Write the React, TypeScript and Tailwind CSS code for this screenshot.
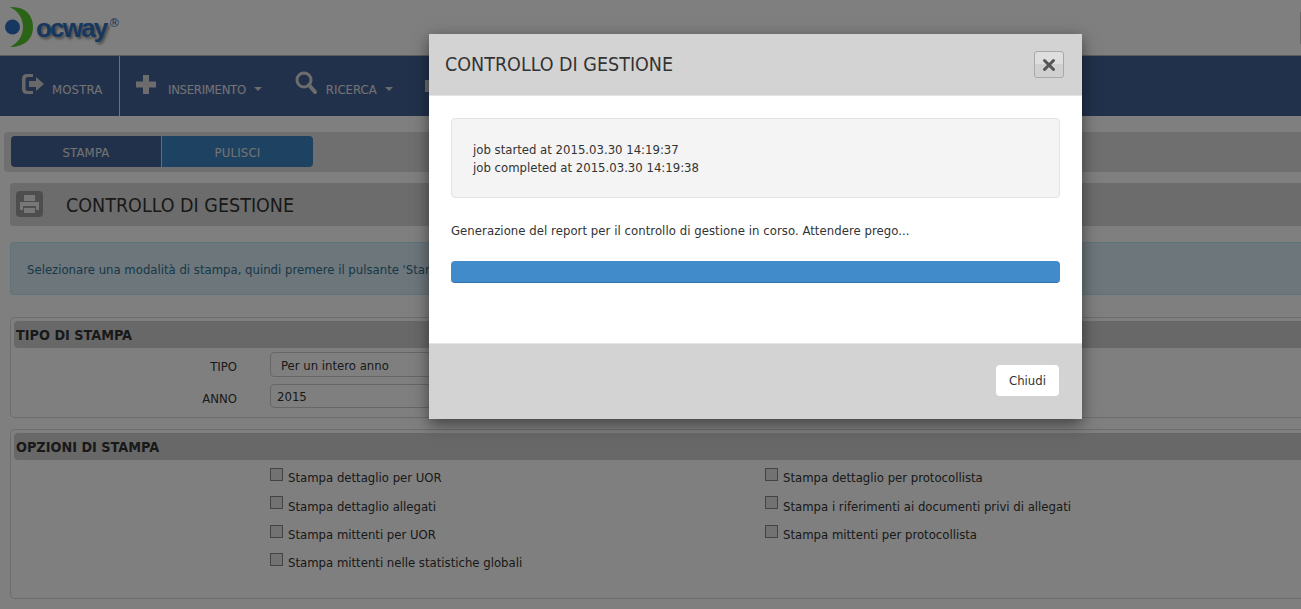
import { X } from 'lucide-react'

const leftOptions = [
  'Stampa dettaglio per UOR',
  'Stampa dettaglio allegati',
  'Stampa mittenti per UOR',
  'Stampa mittenti nelle statistiche globali',
]
const rightOptions = [
  'Stampa dettaglio per protocollista',
  'Stampa i riferimenti ai documenti privi di allegati',
  'Stampa mittenti per protocollista',
]

function Logo() {
  return (
    <div className="flex items-center h-[55px] pl-[5px]">
      <svg width="34" height="42" viewBox="0 0 34 42" className="shrink-0 -mt-[1px]">
        <circle cx="7.5" cy="21" r="7.5" fill="#2c6ebe" />
        <path d="M5 1 C20 0 28 9 28 21 C28 33 20 41 5 41 C13 37 18 30 18 21 C18 12 13 5 5 1 Z" fill="#56c62e" />
      </svg>
      <span className="font-['Liberation_Sans',sans-serif] [font-stretch:normal] font-bold text-[26px] tracking-[-1.8px] leading-none text-[#2c6ebe] -ml-[3px] mt-[1px] [text-shadow:2px_2px_3px_rgba(0,0,0,0.45)]">
        ocway
      </span>
      <span className="text-[13px] leading-none text-[#2c6ebe] self-start mt-[16px] ml-[2px]">®</span>
      <div className="ml-auto mb-[-1px] h-[32px] w-[1px] self-center bg-[#cccccc]" />
    </div>
  )
}

function Caret() {
  return <span className="inline-block ml-[8px] mt-[5px] border-x-[4px] border-x-transparent border-t-[4px] border-t-[#d8d8d8]" />
}

function NavBar() {
  return (
    <nav className="flex h-[61px] items-center bg-[#446296] border-t border-[#b8b8b8] text-[13px] text-[#e6e6e6]">
      <div className="flex h-full w-[120px] items-center border-r border-[#e0e0e0] pl-[21px]">
        <svg width="24" height="22" viewBox="0 0 24 22" className="mb-[4px]">
          <path d="M12 1 H6 Q1 1 1 6 V16 Q1 21 6 21 H12 V18 H7 Q4.5 18 4.5 15.5 V6.5 Q4.5 4 7 4 H12 Z" fill="#d0d0d0" />
          <path d="M8 8 H15 V4 L23 11 L15 18 V14 H8 Z" fill="#d0d0d0" />
        </svg>
        <span className="ml-[7px] mt-[7px] tracking-[0.15px]">MOSTRA</span>
      </div>
      <div className="flex items-center pl-[16px]">
        <svg width="20" height="19" viewBox="0 0 20 19" className="mb-[3px]">
          <path d="M7 0 H13 V6.5 H20 V12.5 H13 V19 H7 V12.5 H0 V6.5 H7 Z" fill="#d8d8d8" />
        </svg>
        <span className="ml-[12px] mt-[7px] tracking-[-0.3px]">INSERIMENTO</span>
        <Caret />
      </div>
      <div className="flex items-center pl-[33px]">
        <svg width="22" height="23" viewBox="0 0 22 23" className="mb-[7px]">
          <circle cx="9" cy="9" r="7" fill="none" stroke="#d8d8d8" strokeWidth="3" />
          <path d="M14 14 L20 21" stroke="#d8d8d8" strokeWidth="4" strokeLinecap="round" />
        </svg>
        <span className="ml-[9px] mt-[7px]">RICERCA</span>
        <Caret />
      </div>
      <div className="ml-[32px] h-[12px] w-[20px] bg-[#d8d8d8]" />
    </nav>
  )
}

function Toolbar() {
  return (
    <div className="mt-[16px] ml-[4px] flex h-[40px] items-start rounded-l-[4px] bg-[#dedede] pl-[7px] pt-[4px]">
      <div className="flex h-[31px] w-[302px] overflow-hidden rounded-[4px] text-[13px] tracking-[0.2px] text-[#e6e6e6]">
        <div className="flex w-[151px] items-center justify-center border-r border-[#d8d8d8] bg-[#446296] pt-[2px]">STAMPA</div>
        <div className="flex flex-1 items-center justify-center bg-[#3c84c4] pt-[2px]">PULISCI</div>
      </div>
    </div>
  )
}

function TitleBar() {
  return (
    <div className="mt-[11px] ml-[10px] flex h-[43px] items-center rounded-l-[4px] bg-[#d8d8d8] pl-[6px]">
      <div className="mb-[2px] flex h-[26px] w-[27px] items-center justify-center rounded-[4px] bg-[#9c9c9c]">
        <svg width="21" height="20" viewBox="0 0 21 20">
          <path d="M5 1 H16 V7 H5 Z M1 8 H20 V16 H17 V12 H4 V16 H1 Z M5 14 H16 V19 H5 Z" fill="#eeeeee" />
        </svg>
      </div>
      <h1 className="ml-[23px] mt-[2px] text-[19.5px] font-normal text-[#333333]">CONTROLLO DI GESTIONE</h1>
    </div>
  )
}

function Alert() {
  return (
    <div className="mt-[16px] ml-[10px] flex h-[53px] items-center rounded-l-[4px] border border-r-0 border-[#bce8f1] bg-[#d9edf7] pl-[16px] pt-[2px] text-[13px] text-[#31708f]">
      Selezionare una modalità di stampa, quindi premere il pulsante 'Stampa' per avviare la generazione del report.
    </div>
  )
}

function Section({ title, className, children }: { title: string; className: string; children: React.ReactNode }) {
  return (
    <section className={`ml-[10px] rounded-l-[5px] border border-r-0 border-[#d8d8d8] pl-[3px] pt-[3px] ${className}`}>
      <h2 className="flex h-[27px] items-center rounded-l-[4px] bg-[#d0d0d0] pl-[2px] pt-[3px] text-[14.3px] font-bold text-[#333333]">{title}</h2>
      {children}
    </section>
  )
}

function Option({ label }: { label: string }) {
  return (
    <label className="flex h-[28.3px] items-center text-[13px] text-[#333333]">
      <span className="mb-[5px] h-[13px] w-[13px] shrink-0 border border-[#888888] bg-[#e4e4e4]" />
      <span className="ml-[5px] mt-[2px]">{label}</span>
    </label>
  )
}

function Modal() {
  return (
    <div className="absolute left-[429px] top-[34px] flex h-[385px] w-[653px] flex-col bg-white shadow-[0_5px_15px_rgba(0,0,0,0.5)]">
      <div className="flex h-[62px] shrink-0 items-center justify-between border-b border-[#e5e5e5] bg-[#d3d3d3] pl-[16px] pr-[18px]">
        <h3 className="text-[19.5px] font-normal text-[#333333]">CONTROLLO DI GESTIONE</h3>
        <button className="flex h-[27px] w-[30px] items-center justify-center rounded-[3px] border border-[#a8a8a8] bg-[linear-gradient(#dedede_50%,#d0d0d0_50%)]">
          <X size={18} strokeWidth={4} className="text-[#555555]" />
        </button>
      </div>
      <div className="flex-1 px-[22px] pt-[22px]">
        <div className="flex h-[80px] flex-col justify-center rounded-[4px] border border-[#e3e3e3] bg-[#f4f4f4] pl-[21px] pt-[2px] text-[13px] leading-[18px] text-[#333333]">
          <p>job started at 2015.03.30 14:19:37</p>
          <p>job completed at 2015.03.30 14:19:38</p>
        </div>
        <p className="mt-[24px] text-[13px] leading-[18px] tracking-[0.05px] text-[#333333]">
          Generazione del report per il controllo di gestione in corso. Attendere prego...
        </p>
        <div className="mt-[21px] h-[22px] rounded-[4px] border-b border-[#3071a9] bg-[#428bca]" />
      </div>
      <div className="flex h-[76px] shrink-0 items-start justify-end border-t border-[#e5e5e5] bg-[#d3d3d3] pr-[23px] pt-[21px]">
        <button className="h-[31px] w-[63px] rounded-[4px] bg-white text-[13px] text-[#333333]">Chiudi</button>
      </div>
    </div>
  )
}

export default function App() {
  return (
    <div className="relative h-[609px] overflow-hidden bg-white font-['DejaVu_Sans_Condensed','DejaVu_Sans',sans-serif] [font-stretch:condensed]">
      <Logo />
      <NavBar />
      <Toolbar />
      <TitleBar />
      <Alert />

      <Section title="TIPO DI STAMPA" className="mt-[22px] h-[101px]">
        <div className="grid grid-cols-[223px_530px] items-center gap-x-[33px] gap-y-[7px] pt-[4px] text-[13px] text-[#333333]">
          <span className="pt-[5px] text-right">TIPO</span>
          <div className="flex h-[25px] items-center rounded-[4px] border border-[#cccccc] bg-white pl-[10px] pt-[2px]">Per un intero anno</div>
          <span className="pt-[5px] text-right">ANNO</span>
          <div className="flex h-[24px] items-center rounded-[4px] border border-[#cccccc] bg-white pl-[6px]">2015</div>
        </div>
      </Section>

      <Section title="OPZIONI DI STAMPA" className="mt-[11px] h-[170px]">
        <div className="grid grid-cols-[495px_1fr] pl-[256px] pt-[3px]">
          <div>{leftOptions.map(o => <Option key={o} label={o} />)}</div>
          <div>{rightOptions.map(o => <Option key={o} label={o} />)}</div>
        </div>
      </Section>

      <div className="absolute inset-0 bg-black/50" />
      <Modal />
    </div>
  )
}
